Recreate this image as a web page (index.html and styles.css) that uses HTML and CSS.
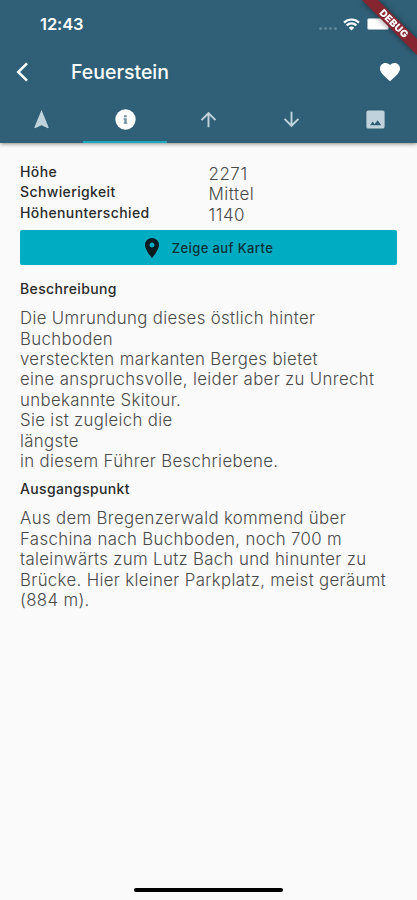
FILE: index.html
```html
<!DOCTYPE html>
<html lang="de">
<head>
  <meta charset="UTF-8">
  <meta name="viewport" content="width=device-width, initial-scale=1.0">
  <title>Feuerstein</title>
  <link rel="stylesheet" href="styles.css">
</head>
<body>
  <header>
    <div class="status-bar">
      <span class="time">12:43</span>
      <div class="status-icons">
        <span class="signal"><i></i><i></i><i></i><i></i></span>
        <svg class="wifi" width="17" height="13" viewBox="0 0 17 13" fill="none" stroke="#fff" stroke-width="2.2">
          <path d="M1 4.6a10.6 10.6 0 0 1 15 0M3.7 7.4a6.8 6.8 0 0 1 9.6 0"/>
          <path d="M8.5 12.5L5.8 9.7a3.9 3.9 0 0 1 5.4 0z" fill="#fff" stroke="none"/>
        </svg>
        <span class="battery"></span>
      </div>
    </div>

    <div class="app-bar">
      <a href="#" class="back">
        <svg width="14" height="20" viewBox="0 0 14 20" fill="none" stroke="#fff" stroke-width="2.5"><path d="M12 1.3L3.2 10l8.8 8.7"/></svg>
      </a>
      <h1>Feuerstein</h1>
      <a href="#" class="favorite">
        <svg width="24" height="24" viewBox="0 0 24 24" fill="#fff"><path d="M12 21.35l-1.45-1.32C5.4 15.36 2 12.28 2 8.5 2 5.42 4.42 3 7.5 3c1.74 0 3.41.81 4.5 2.09C13.09 3.81 14.76 3 16.5 3 19.58 3 22 5.42 22 8.5c0 3.78-3.4 6.86-8.55 11.54L12 21.35z"/></svg>
      </a>
    </div>

    <nav class="tabs">
      <a href="#"><svg viewBox="0 0 24 24"><path d="M12 2L4.500 20.290l.710.710L12 18l6.790 3 .710-.710z"/></svg></a>
      <a href="#" class="active"><svg viewBox="0 0 24 24"><circle cx="12" cy="12" r="10.6"/><path d="M10.4 7.600h2.800v2h-2.800zM10 10.800h3.200v4.400h.8v1.300h-4v-1.300h.8v-3H10z" fill="#6f8c9b"/></svg></a>
      <a href="#"><svg viewBox="0 0 24 24"><path d="M4 12l1.410 1.410L11 7.830V20h2V7.830l5.580 5.590L20 12l-8-8-8 8z"/></svg></a>
      <a href="#"><svg viewBox="0 0 24 24"><path d="M20 12l-1.410-1.410L13 16.170V4h-2v12.170l-5.580-5.590L4 12l8 8 8-8z"/></svg></a>
      <a href="#"><svg viewBox="0 0 24 24"><path d="M21.500 19.500v-15c0-1.100-.9-2-2-2h-15c-1.100 0-2 .9-2 2v15c0 1.100.9 2 2 2h15c1.100 0 2-.9 2-2zM9 14l2 2.600 3.300-3.800L18 18H6.300z"/></svg></a>
    </nav>
  </header>

  <main>
    <dl class="facts">
      <dt>Höhe</dt><dd>2271</dd>
      <dt>Schwierigkeit</dt><dd>Mittel</dd>
      <dt>Höhenunterschied</dt><dd>1140</dd>
    </dl>

    <button class="map-button">
      <svg width="24" height="24" viewBox="0 0 24 24"><path d="M12 2C8.130 2 5 5.130 5 9c0 5.250 7 13 7 13s7-7.750 7-13c0-3.870-3.130-7-7-7zm0 9.500c-1.380 0-2.500-1.120-2.500-2.500s1.120-2.500 2.500-2.500 2.500 1.120 2.500 2.500-1.120 2.500-2.500 2.500z"/></svg>
      <span>Zeige auf Karte</span>
    </button>

    <section>
      <h2>Beschreibung</h2>
      <p>Die Umrundung dieses östlich hinter
Buchboden
versteckten markanten Berges bietet
eine anspruchsvolle, leider aber zu Unrecht
unbekannte Skitour.
Sie ist zugleich die
längste
in diesem Führer Beschriebene.</p>
    </section>

    <section>
      <h2>Ausgangspunkt</h2>
      <p>Aus dem Bregenzerwald kommend über
Faschina nach Buchboden, noch 700 m
taleinwärts zum Lutz Bach und hinunter zu
Brücke. Hier kleiner Parkplatz, meist geräumt
(884 m).</p>
    </section>
  </main>

  <div class="home-indicator"></div>

  <svg class="debug-banner" width="60" height="60" viewBox="0 0 60 60">
    <path d="M5 0h16l39 39v16z" fill="#852530"/>
    <text x="0" y="0" transform="translate(37 23.5) rotate(45)" text-anchor="middle" dy="3.6">DEBUG</text>
  </svg>
</body>
</html>
```

FILE: styles.css
```css
* {
  box-sizing: border-box;
}
body {
  margin: 0;
  height: 900px;
  position: relative;
  display: flex;
  flex-direction: column;
  font-family: Inter, "Liberation Sans", sans-serif;
  background: #fafafa;
  color: #2b2b2b;
  overflow: hidden;
}
header {
  height: 143px;
  background: #306077;
  color: #fff;
  box-shadow: 0 1px 4px rgba(0, 0, 0, 0.45);
}
.status-bar {
  height: 48px;
  padding: 0 28px 0 40px;
  display: flex;
  justify-content: space-between;
  align-items: center;
}
.time {
  font-size: 16.5px;
  font-weight: 600;
  letter-spacing: -0.1px;
}
.status-icons {
  display: flex;
  align-items: center;
}
.signal {
  display: flex;
  gap: 2px;
  margin: 8px 6px 0 0;
}
.signal i {
  width: 3px;
  height: 3px;
  border-radius: 50%;
  background: #5f8495;
}
.wifi {
  margin-right: 7px;
}
.battery {
  width: 22px;
  height: 12px;
  border: 1px solid #9db3be;
  border-radius: 2px;
  background: #fff;
}
.app-bar {
  height: 47px;
  padding: 0 15px;
  display: flex;
  align-items: center;
}
.app-bar a {
  display: flex;
}
.app-bar h1 {
  flex: 1;
  margin: 0 0 0 42px;
  font-size: 19.5px;
  font-weight: 500;
}
.tabs {
  height: 48px;
  display: flex;
}
.tabs a {
  flex: 1;
  padding-top: 2px;
  display: flex;
  align-items: center;
  justify-content: center;
  border-bottom: 2px solid transparent;
}
.tabs svg {
  width: 23px;
  height: 23px;
  fill: #c0d3dc;
}
.tabs .active {
  border-color: #1ba9bc;
}
.tabs .active svg {
  fill: #fff;
}
main {
  padding: 19px 20px 0;
}
.facts {
  margin: 0 0 7px;
  display: grid;
  grid-template-columns: 1fr 1fr;
  grid-auto-rows: 20.4px;
  align-items: start;
}
.facts dt {
  font-size: 14px;
  font-weight: 500;
  line-height: 19px;
  letter-spacing: 0.38px;
}
.facts dd {
  margin: 0;
  font-size: 17px;
  font-weight: 300;
  line-height: 24px;
  letter-spacing: 0.5px;
  color: #4a4a4a;
}
.map-button {
  width: 100%;
  height: 35px;
  padding: 0 4px 0 0;
  border: 0;
  border-radius: 2px;
  background: #00acc1;
  display: flex;
  align-items: center;
  justify-content: center;
  gap: 8px;
  font: 500 13px Inter, "Liberation Sans", sans-serif;
  letter-spacing: 0.4px;
  color: #08323a;
}
.map-button svg {
  fill: #071b20;
}
section h2 {
  margin: 0;
  padding-top: 15px;
  font-size: 14px;
  font-weight: 500;
  line-height: 18px;
  letter-spacing: 0.36px;
}
section p {
  margin: 10px 0 0;
  font-size: 16.8px;
  font-weight: 300;
  line-height: 20.4px;
  letter-spacing: 0.35px;
  color: #4a4a4a;
  white-space: pre;
}
section + section h2 {
  padding-top: 9px;
}
.home-indicator {
  width: 149px;
  height: 4px;
  margin: auto auto 8px;
  border-radius: 2px;
  background: #000;
}
.debug-banner {
  position: absolute;
  top: 0;
  right: 0;
  filter: drop-shadow(0 0 3px rgba(0, 0, 0, 0.5));
}
.debug-banner text {
  font-size: 10px;
  font-weight: 900;
  letter-spacing: 0.2px;
  fill: #fff;
}
```
